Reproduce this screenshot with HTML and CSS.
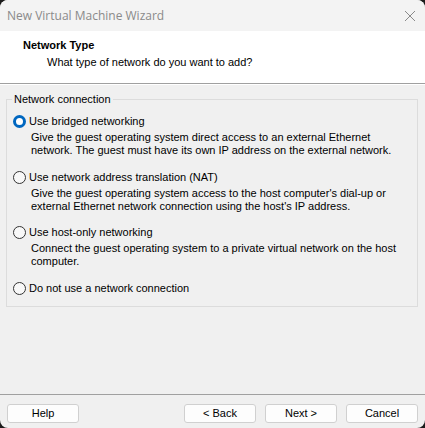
FILE: index.html
```html
<!DOCTYPE html>
<html>
<head>
<meta charset="utf-8">
<link rel="stylesheet" href="styles.css">
</head>
<body>
<div class="window">
  <div class="titlebar">
    <span class="title">New Virtual Machine Wizard</span>
    <svg class="close" width="12" height="12" viewBox="0 0 12 12"><path d="M1 1 L11 11 M11 1 L1 11" stroke="#8a8a8a" stroke-width="1" fill="none"/></svg>
  </div>
  <div class="header">
    <div class="h-title">Network Type</div>
    <div class="h-sub">What type of network do you want to add?</div>
  </div>
  <div class="content">
    <div class="group">
      <span class="legend">Network connection</span>
      <div class="option">
        <div class="row"><span class="radio checked"></span><span>Use bridged networking</span></div>
        <div class="desc">Give the guest operating system direct access to an external Ethernet<br>network. The guest must have its own IP address on the external network.</div>
      </div>
      <div class="option">
        <div class="row"><span class="radio"></span><span>Use network address translation (NAT)</span></div>
        <div class="desc">Give the guest operating system access to the host computer's dial-up or<br>external Ethernet network connection using the host's IP address.</div>
      </div>
      <div class="option">
        <div class="row"><span class="radio"></span><span>Use host-only networking</span></div>
        <div class="desc">Connect the guest operating system to a private virtual network on the host<br>computer.</div>
      </div>
      <div class="option">
        <div class="row"><span class="radio"></span><span>Do not use a network connection</span></div>
      </div>
    </div>
  </div>
  <div class="footer">
    <button class="btn">Help</button>
    <div class="spacer"></div>
    <button class="btn">&lt; Back</button>
    <button class="btn">Next &gt;</button>
    <button class="btn">Cancel</button>
  </div>
</div>
</body>
</html>
```
FILE: styles.css
```css
* { box-sizing: border-box; }
html, body { margin: 0; padding: 0; background: #1c1c1c; }
body { width: 425px; height: 428px; overflow: hidden; font-family: "Liberation Sans", Arial, sans-serif; font-size: 11px; color: #000; }
.window {
  width: 425px; height: 428px; background: #f0f0f0; border-radius: 8px; overflow: hidden;
  display: flex; flex-direction: column;
}
.titlebar {
  height: 31px; background: #f3f3f3; display: flex; align-items: center; justify-content: space-between;
  padding: 0 9px 0 7px;
}
.title { font-family: "Open Sans", "Noto Sans", sans-serif; font-size: 12px; color: #8a8a8a; }
.close { display: block; }
.header {
  height: 53px; background: #fff; padding: 8px 0 0 23px;
  border-bottom: 1px solid #a0a0a0;
}
.h-title { font-weight: bold; line-height: 13px; }
.h-sub { padding-left: 24px; line-height: 13px; margin-top: 4px; }
.content { flex: 1; border-top: 1px solid #fff; padding: 14px 7px 0 6px; }
.group {
  position: relative; border: 1px solid #dcdcdc; height: 208px;
  padding: 15px 6px 0 6px;
}
.legend {
  position: absolute; top: -7px; left: 5px; padding: 0 2px; background: #f0f0f0; line-height: 13px;
}
.option + .option { margin-top: 13.5px; }
.row { display: flex; align-items: center; height: 13px; line-height: 13px; gap: 3px; }
.radio {
  width: 13px; height: 13px; border-radius: 50%; border: 1px solid #333; background: #f8f8f8; flex: none;
}
.radio.checked { border: 3.5px solid #0067c0; background: #fff; }
.desc { padding-left: 18px; line-height: 13px; margin-top: 3px; }
.footer {
  height: 34px; border-top: 1px solid #a0a0a0; display: flex; align-items: flex-start;
  padding: 9px 7px 0 7px; gap: 9px;
}
.spacer { flex: 1; }
.btn {
  width: 72px; height: 19px; background: #fdfdfd; border: 1px solid #d0d0d0; border-radius: 3px;
  font-family: "Liberation Sans", Arial, sans-serif; font-size: 11px; color: #000; padding: 0; line-height: 17px;
}
```
